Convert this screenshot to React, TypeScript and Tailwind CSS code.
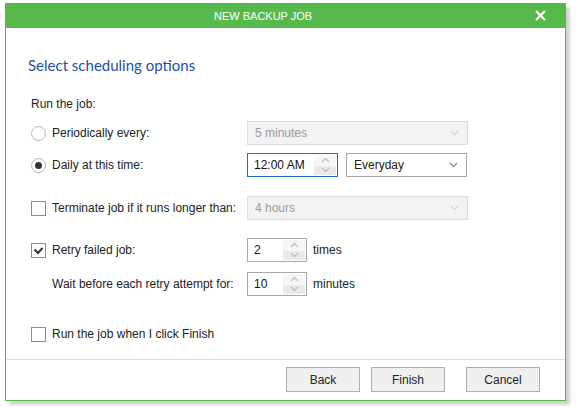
import React from "react";

const font = { fontFamily: '"Liberation Sans", Arial, sans-serif' };

function Chevron({ up = false, className = "" }: { up?: boolean; className?: string }) {
  return (
    <svg width="9" height="6" viewBox="0 0 9 6" className={className}>
      <polyline
        points={up ? "1,5 4.5,1.5 8,5" : "1,1 4.5,4.5 8,1"}
        fill="none"
        stroke="currentColor"
        strokeWidth="1.3"
      />
    </svg>
  );
}

function Select({ value, disabled = false, width }: { value: string; disabled?: boolean; width: string }) {
  return (
    <div
      className={`${width} h-[24px] flex items-center justify-between pl-[7px] pr-[8px] border ${
        disabled ? "bg-[#f2f2f2] border-[#dcdcdc] text-[#9a9a9a]" : "bg-white border-[#a6a6a6] text-[#222]"
      }`}
    >
      <span>{value}</span>
      <Chevron className={disabled ? "text-[#d2d2d2]" : "text-[#8a8a8a]"} />
    </div>
  );
}

function Spinner({ value, width, focused = false }: { value: string; width: string; focused?: boolean }) {
  return (
    <div
      className={`${width} h-[24px] flex border bg-white ${focused ? "border-[#1a6fc4]" : "border-[#a6a6a6]"}`}
    >
      <span className="flex-1 pl-[6px] flex items-center text-[#111]">{value}</span>
      <div className="w-[22px] flex flex-col my-[1px] mr-[1px]">
        <div className="flex-1 flex items-center justify-center bg-[#f5f5f5] text-[#bdbdbd]">
          <Chevron up />
        </div>
        <div className="flex-1 flex items-center justify-center bg-[#e9e9e9] text-[#bdbdbd] border-t border-[#f8f8f8]">
          <Chevron />
        </div>
      </div>
    </div>
  );
}

function Radio({ checked = false }: { checked?: boolean }) {
  return (
    <span className="w-[15px] h-[15px] rounded-full border border-[#b5b5b5] bg-white flex items-center justify-center">
      {checked && <span className="w-[7px] h-[7px] rounded-full bg-[#333]" />}
    </span>
  );
}

function Checkbox({ checked = false }: { checked?: boolean }) {
  return (
    <span className="w-[15px] h-[15px] border border-[#8c8c8c] bg-white flex items-center justify-center">
      {checked && (
        <svg width="11" height="9" viewBox="0 0 11 9">
          <polyline points="1.5,3.5 5,7 9.5,2" fill="none" stroke="#333" strokeWidth="2" />
        </svg>
      )}
    </span>
  );
}

function Row({ control, label, className = "", children }: { control?: React.ReactNode; label: string; className?: string; children?: React.ReactNode }) {
  return (
    <div className={`flex items-center h-[24px] ${className}`}>
      <div className="w-[21px] flex items-center">{control}</div>
      <span className="w-[195px]">{label}</span>
      {children}
    </div>
  );
}

function Button({ label }: { label: string }) {
  return (
    <button className="w-[74px] h-[25px] bg-[#efefef] border border-[#adadad] text-[#222] text-[12px]">
      {label}
    </button>
  );
}

export default function App() {
  return (
    <div className="w-[576px] h-[407px] bg-white pt-[3px] pl-[5px]" style={font}>
      <div className="w-[561px] h-[398px] flex flex-col border border-[#55b94b] shadow-[4px_4px_3px_rgba(0,0,0,0.18)] bg-white">
        {/* Title bar */}
        <div className="h-[24px] bg-[#55b94b] flex items-center text-white text-[11px] relative">
          <span className="pl-[208px]">NEW BACKUP JOB</span>
          <svg className="absolute left-[529px] top-[6px]" width="11" height="11" viewBox="0 0 11 11">
            <path d="M1 1 L10 10 M10 1 L1 10" stroke="white" strokeWidth="2.2" />
          </svg>
        </div>

        {/* Body */}
        <div className="flex-1 flex flex-col text-[12px] text-[#222]">
          <h1
            className="mt-[27px] ml-[22px] text-[15px] text-[#1f4ea3] leading-[20px]"
            style={{ fontFamily: 'Lato, "Liberation Sans", sans-serif' }}
          >
            Select scheduling options
          </h1>

          <div className="ml-[25px] mt-[20px] flex flex-col">
            <div className="h-[18px] flex items-center">Run the job:</div>

            <Row control={<Radio />} label="Periodically every:" className="mt-[8px]">
              <Select value="5 minutes" disabled width="w-[221px]" />
            </Row>
            <Row control={<Radio checked />} label="Daily at this time:" className="mt-[8px]">
              <Spinner value="12:00 AM" width="w-[91px]" focused />
              <div className="ml-[8px]">
                <Select value="Everyday" width="w-[121px]" />
              </div>
            </Row>

            <Row control={<Checkbox />} label="Terminate job if it runs longer than:" className="mt-[19px]">
              <Select value="4 hours" disabled width="w-[221px]" />
            </Row>

            <Row control={<Checkbox checked />} label="Retry failed job:" className="mt-[18px]">
              <Spinner value="2" width="w-[60px]" />
              <span className="ml-[6px]">times</span>
            </Row>
            <Row label="Wait before each retry attempt for:" className="mt-[10px]">
              <Spinner value="10" width="w-[60px]" />
              <span className="ml-[6px]">minutes</span>
            </Row>

            <Row control={<Checkbox />} label="Run the job when I click Finish" className="mt-[26px]" />
          </div>
        </div>

        {/* Footer */}
        <div className="h-[41px] border-t border-[#dedede] flex items-center justify-end pr-[25px] gap-[11px] pb-[1px]">
          <Button label="Back" />
          <Button label="Finish" />
          <div className="ml-[10px]">
            <Button label="Cancel" />
          </div>
        </div>
      </div>
    </div>
  );
}
